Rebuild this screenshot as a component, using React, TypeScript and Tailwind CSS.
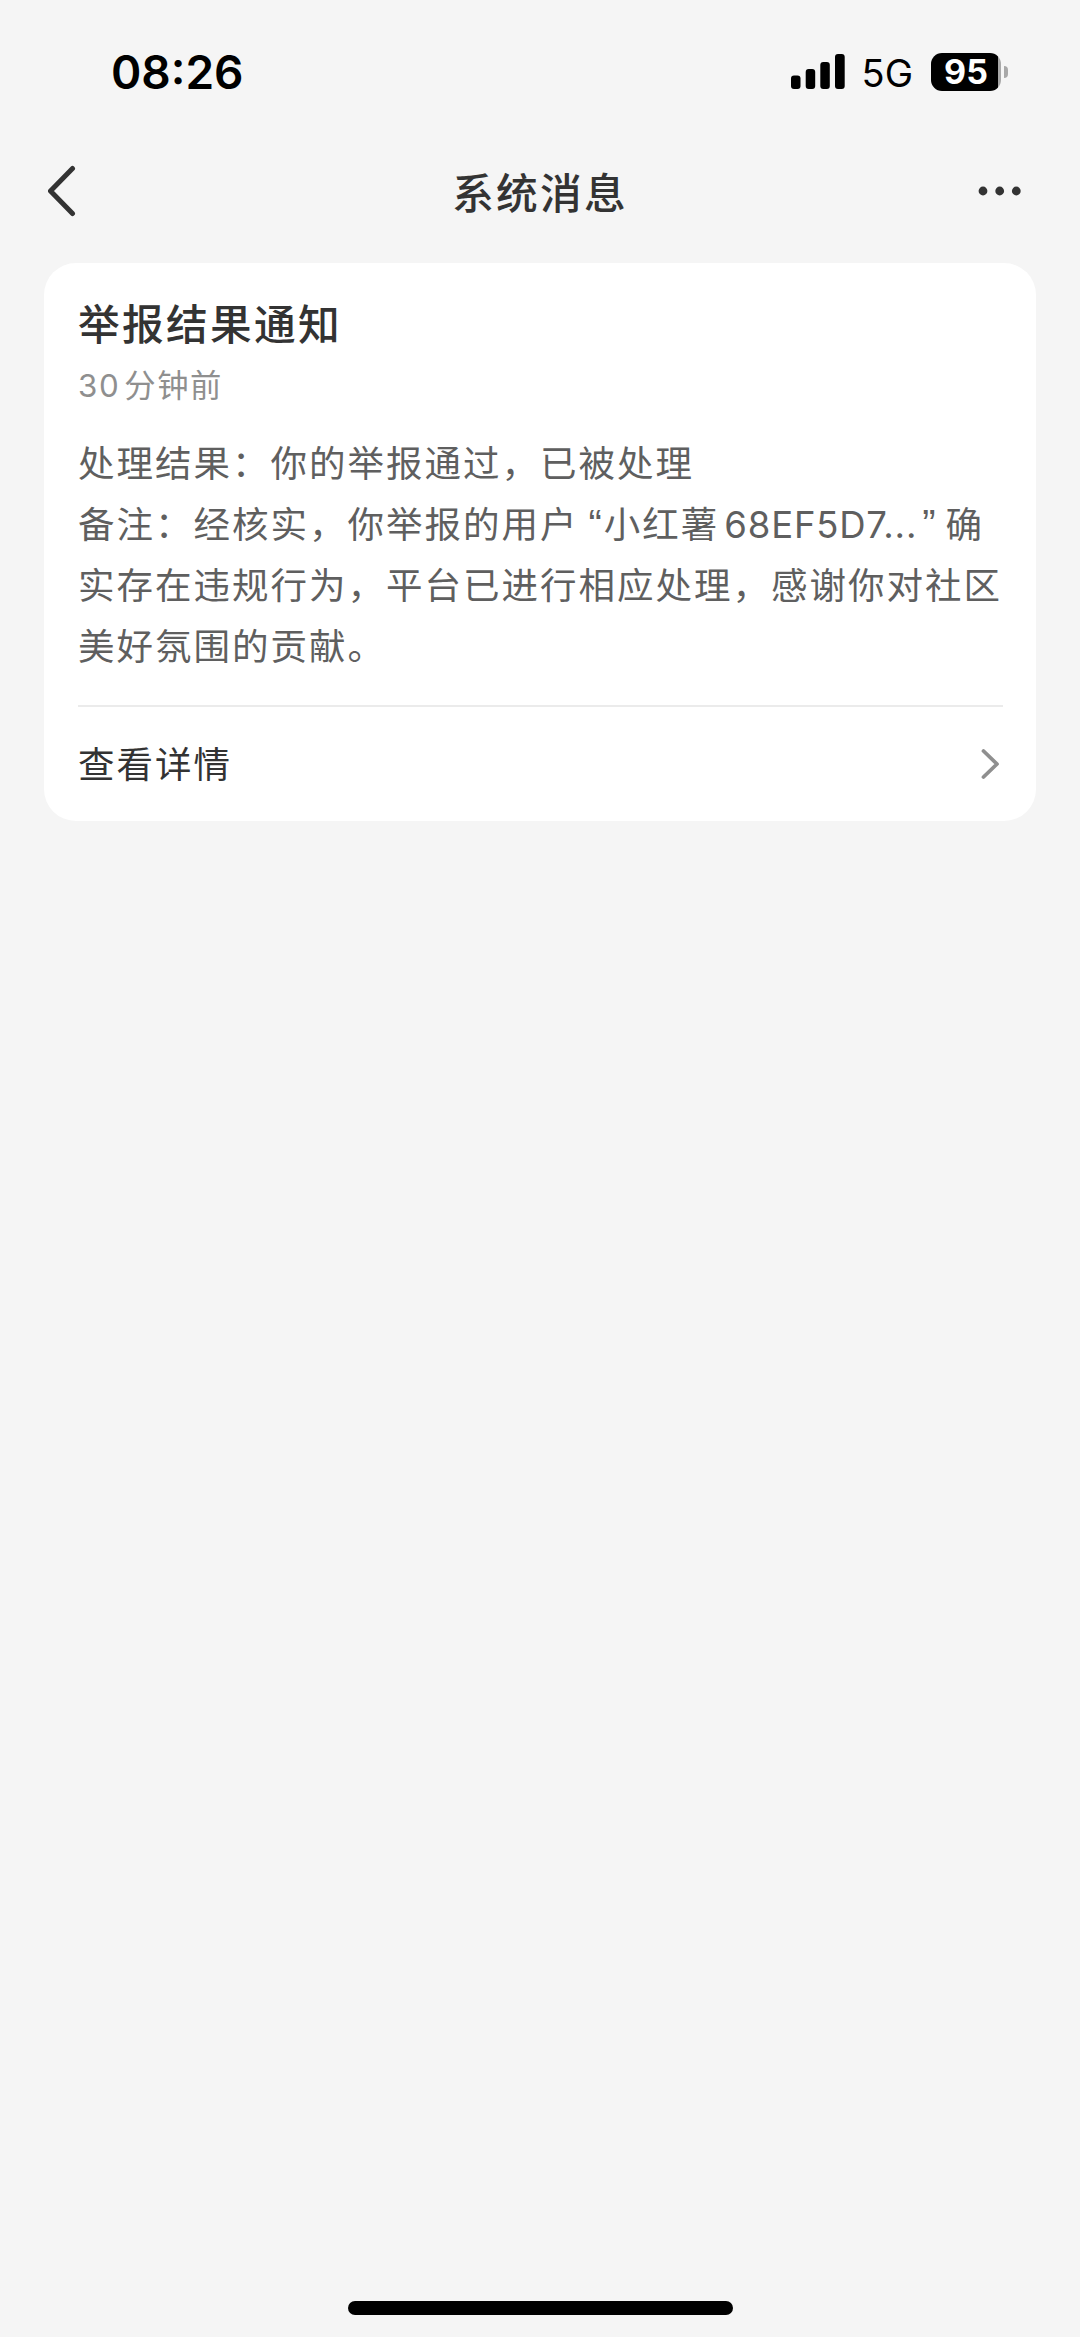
import { ReactNode } from "react";

type NoticeType = {
  title: string;
  action: string;
};

const notice: NoticeType = {
  title: "举报结果通知",
  action: "查看详情",
};

// leading-[0] keeps the mixed fonts from growing the line box
function Latin({
  children,
  className = "",
}: {
  children: ReactNode;
  className?: string;
}) {
  return (
    <span className={`font-['Inter',sans-serif] leading-[0] ${className}`}>
      {children}
    </span>
  );
}

function Quote({
  children,
  className = "",
}: {
  children: ReactNode;
  className?: string;
}) {
  return (
    <span
      className={`font-['Liberation_Sans',sans-serif] text-[40px] leading-[0] ${className}`}
    >
      {children}
    </span>
  );
}

function StatusBar() {
  return (
    <div className="flex h-36 items-center justify-between pr-[72px] pl-[111px] font-['Inter',sans-serif] text-black">
      <span className="pb-px text-[46px] leading-none font-semibold">
        08:26
      </span>
      <div className="flex items-center">
        <svg width="54" height="36" viewBox="0 0 54 36" fill="currentColor">
          <rect x="0" y="21.5" width="9.5" height="13.5" rx="3" />
          <rect x="14.7" y="15" width="9.5" height="20" rx="3" />
          <rect x="29.3" y="8" width="9.5" height="27" rx="3" />
          <rect x="44" y="0" width="9.7" height="35" rx="3" />
        </svg>
        <span className="ml-[17px] pt-px text-[38px] leading-[46px]">5G</span>
        <div className="ml-[18px] flex items-center">
          <div className="flex h-[38px] w-[70px] items-center justify-center rounded-[11px] bg-[linear-gradient(to_right,#000_67px,#a8a8a8_67px)] text-[34px] leading-[38px] font-bold text-white">
            95
          </div>
          <div className="ml-[3px] h-3 w-1 rounded-r-full bg-[#a8a8a8]" />
        </div>
      </div>
    </div>
  );
}

function NavBar() {
  return (
    <header className="flex h-[94px] items-center justify-between px-12 text-[#333333]">
      <button type="button" aria-label="返回">
        <svg
          width="28"
          height="52"
          viewBox="0 0 28 52"
          fill="none"
          stroke="currentColor"
          strokeWidth="5"
          strokeLinecap="round"
          strokeLinejoin="round"
        >
          <path d="M24.5 3.5L2.5 26l22 22.5" />
        </svg>
      </button>
      <h1 className="pl-[26px] text-[41.7px] leading-[60px] font-medium tracking-[2.2px]">
        系统消息
      </h1>
      <button type="button" aria-label="更多">
        <svg width="54" height="12" viewBox="0 0 54 12" fill="currentColor">
          <circle cx="5" cy="6" r="4.4" />
          <circle cx="21.7" cy="6" r="4.4" />
          <circle cx="38.3" cy="6" r="4.4" />
        </svg>
      </button>
    </header>
  );
}

function NoticeCard() {
  return (
    <section className="mx-11 mt-[25px] rounded-[32px] bg-white pt-[29px] pr-[33px] pl-[34px]">
      <h2 className="text-[41.7px] leading-[60px] font-medium tracking-[2.3px] text-[#333333]">
        {notice.title}
      </h2>
      <p className="mt-[10px] text-[31.3px] leading-[44px] tracking-[1.6px] text-[#8f8f8f]">
        <Latin className="mr-1">30</Latin>
        分钟前
      </p>
      <div className="mt-[25px] text-[36.5px] leading-[61px] tracking-[2px] whitespace-nowrap text-[#5f5f5f]">
        <p>处理结果：你的举报通过，已被处理</p>
        <p>
          备注：经核实，你举报的用户
          <Quote className="ml-2.5">“</Quote>
          小红薯
          <Latin className="ml-[5px] tracking-[0.8px]">68EF5D7...</Latin>
          <Quote className="mr-2 ml-[5px]">”</Quote>确
        </p>
        <p>实存在违规行为，平台已进行相应处理，感谢你对社区</p>
        <p>美好氛围的贡献。</p>
      </div>
      <div className="mt-[30px] flex h-[116px] items-center justify-between border-t-2 border-[#ebebeb] text-[36.5px] tracking-[2px] text-[#333333]">
        <span className="pb-px">{notice.action}</span>
        <svg
          width="20"
          height="32"
          viewBox="0 0 20 32"
          fill="none"
          stroke="#8f8f8f"
          strokeWidth="3.8"
          strokeLinecap="round"
          strokeLinejoin="round"
          className="mr-[3px]"
        >
          <path d="M3.5 3L17 16 3.5 29" />
        </svg>
      </div>
    </section>
  );
}

export default function App() {
  return (
    <div className="flex h-[2337px] w-[1080px] flex-col bg-[#f5f5f5] font-['Noto_Sans_CJK_SC',sans-serif]">
      <StatusBar />
      <NavBar />
      <NoticeCard />
      <div className="mx-auto mt-auto mb-[22px] h-[14px] w-[385px] rounded-full bg-black" />
    </div>
  );
}
